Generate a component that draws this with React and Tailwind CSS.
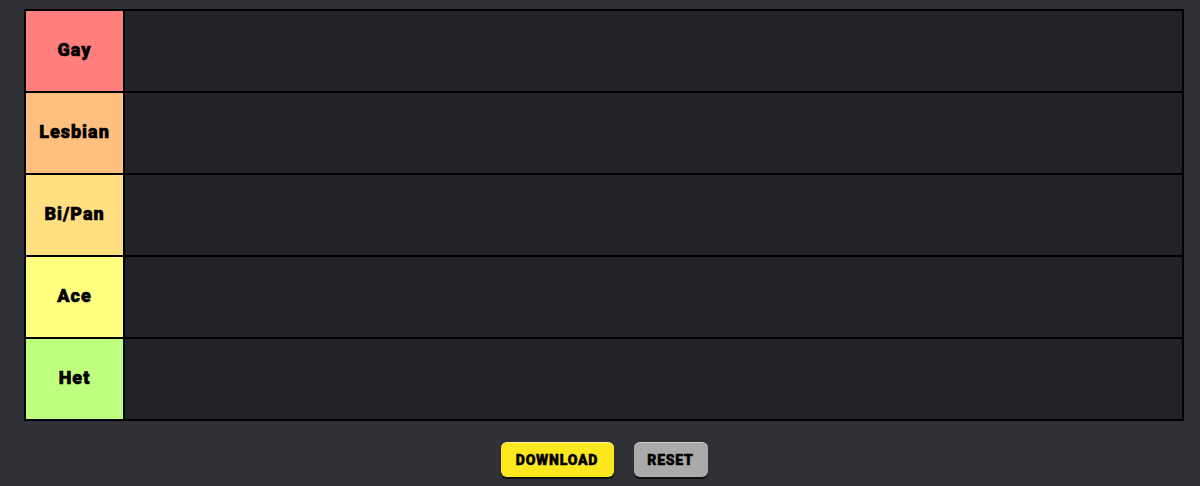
const TIERS = [
  { label: 'Gay', color: 'bg-[#ff7f7f]' },
  { label: 'Lesbian', color: 'bg-[#ffbf7f]' },
  { label: 'Bi/Pan', color: 'bg-[#ffdf7f]' },
  { label: 'Ace', color: 'bg-[#ffff7f]' },
  { label: 'Het', color: 'bg-[#bfff7f]' },
];

export default function App() {
  return (
    <div className="min-h-screen bg-[#303136] pt-[9px] pl-[24px] pb-[10px]" style={{ fontFamily: 'Roboto, "Noto Sans", sans-serif' }}>
      <div className="w-[1160px]">
        <div className="border-2 border-black bg-black flex flex-col gap-[2px]">
          {TIERS.map(t => (
            <div key={t.label} className="flex gap-[2px] h-[80px]">
              <div className={`w-[97px] ${t.color} flex items-center justify-center pb-[3px] text-[18px] font-black tracking-[1px] text-black [-webkit-text-stroke:0.6px_black]`}>
                {t.label}
              </div>
              <div className="flex-1 bg-[#222327]" />
            </div>
          ))}
        </div>

        <div className="flex justify-center gap-[20px] mt-[21px]">
          <button className="w-[113px] h-[35px] rounded-[6px] bg-[#fde81f] border-t border-[#fff59a] text-black text-[14px] font-black tracking-[0.8px] [-webkit-text-stroke:0.5px_black] shadow-[0_2px_0_#111]">
            DOWNLOAD
          </button>
          <button className="w-[74px] h-[35px] rounded-[6px] bg-[#aaaaab] border-t border-[#cfcfcf] text-black text-[14px] font-black tracking-[0.8px] [-webkit-text-stroke:0.5px_black] shadow-[0_2px_0_#111]">
            RESET
          </button>
        </div>
      </div>
    </div>
  );
}
